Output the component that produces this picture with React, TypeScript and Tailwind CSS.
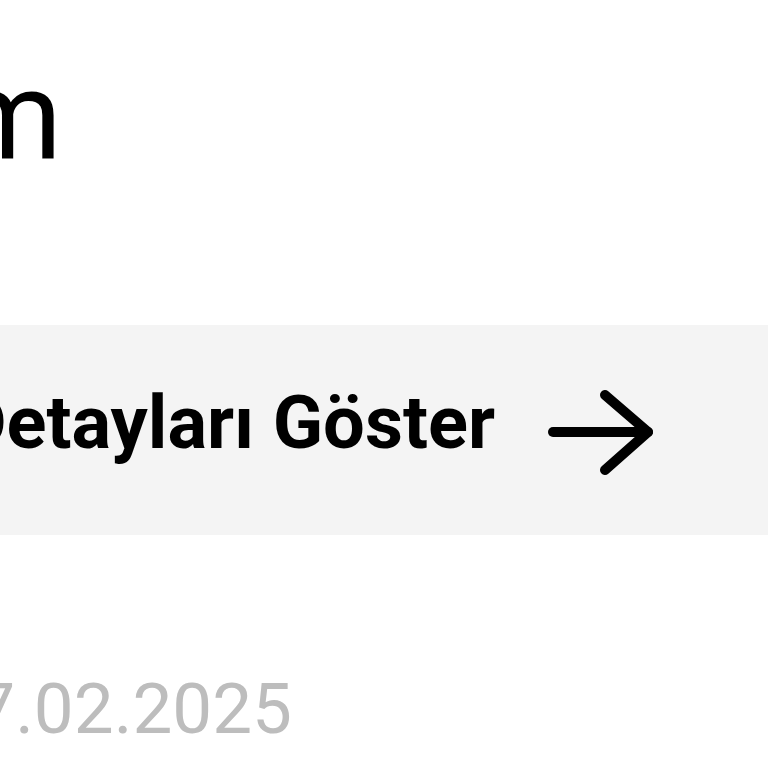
const ArrowIcon = () => (
  <svg width="112" height="92" viewBox="0 0 112 92" fill="none" className="shrink-0 ml-[48px] mt-[1px]">
    <path d="M10 45H105" stroke="#000" strokeWidth="10" strokeLinecap="round" />
    <path d="M62 8L105 45L62 83" stroke="#000" strokeWidth="10" strokeLinecap="round" strokeLinejoin="round" />
  </svg>
);

export default function App() {
  return (
    <div className="w-[768px] h-[768px] overflow-hidden bg-white pt-[54px] font-['Roboto',sans-serif]">
      {/* title */}
      <div className="flex justify-end w-[62px]">
        <span className="whitespace-nowrap text-[124px] leading-none text-black">Ödeme Planım</span>
      </div>

      {/* details button */}
      <div className="mt-[147px] h-[210px] w-full bg-[#f4f4f4]">
        <div className="flex justify-end items-start w-[655px] pt-[61px]">
          <span className="whitespace-nowrap text-[74px] leading-none font-bold text-black">Detayları Göster</span>
          <ArrowIcon />
        </div>
      </div>

      {/* date */}
      <div className="mt-[138px] flex justify-end w-[292px]">
        <span className="whitespace-nowrap text-[71px] leading-none text-[#bdbdbd]">07.02.2025</span>
      </div>
    </div>
  );
}
